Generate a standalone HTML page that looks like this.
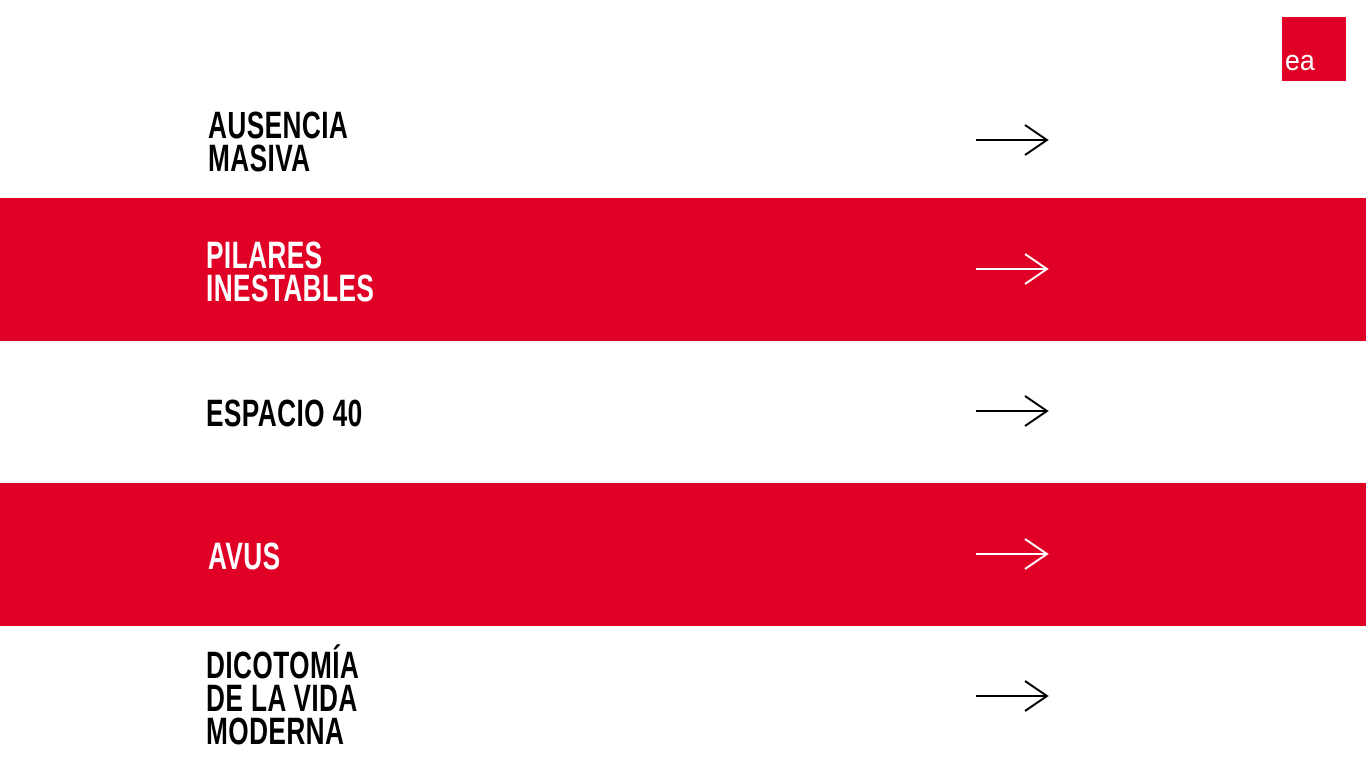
<!DOCTYPE html>
<html><head><style>
body{margin:0;width:1366px;height:768px;overflow:hidden;background:#fff;position:relative;font-family:"Liberation Sans Narrow","Liberation Sans",sans-serif}
.band{position:absolute;left:0;width:1366px;background:#e10025}
.t{position:absolute;left:206px;font-weight:bold;font-size:38px;line-height:33px;transform:scaleX(0.69);transform-origin:left top;white-space:nowrap;letter-spacing:0.6px}
.w{color:#fff}
svg.a{position:absolute;left:975px;width:75px;height:32px}
</style></head><body>
<div class="band" style="top:198px;height:143px"></div>
<div class="band" style="top:483px;height:143px"></div>
<div style="position:absolute;left:1282px;top:17px;width:64px;height:64px;background:#e10025"></div>
<div style="position:absolute;left:1285px;top:44px;color:#fff;font-family:'Liberation Sans',sans-serif;font-size:29px;line-height:34px;transform:scaleX(0.92);transform-origin:left top">ea</div>

<div class="t" style="top:110px;left:208px">AUSENCIA<br>MASIVA</div>
<div class="t w" style="top:240px">PILARES<br>INESTABLES</div>
<div class="t" style="top:398px">ESPACIO 40</div>
<div class="t w" style="top:541px;left:208px">AVUS</div>
<div class="t" style="top:650px">DICOTOMÍA<br>DE LA VIDA<br>MODERNA</div>

<svg class="a" style="top:124px" viewBox="0 0 75 32"><path d="M1 16H72M50 1L72 16L50 31" fill="none" stroke="#000" stroke-width="2"/></svg>
<svg class="a" style="top:253px" viewBox="0 0 75 32"><path d="M1 16H72M50 1L72 16L50 31" fill="none" stroke="#fff" stroke-width="2"/></svg>
<svg class="a" style="top:395px" viewBox="0 0 75 32"><path d="M1 16H72M50 1L72 16L50 31" fill="none" stroke="#000" stroke-width="2"/></svg>
<svg class="a" style="top:538px" viewBox="0 0 75 32"><path d="M1 16H72M50 1L72 16L50 31" fill="none" stroke="#fff" stroke-width="2"/></svg>
<svg class="a" style="top:680px" viewBox="0 0 75 32"><path d="M1 16H72M50 1L72 16L50 31" fill="none" stroke="#000" stroke-width="2"/></svg>
</body></html>
